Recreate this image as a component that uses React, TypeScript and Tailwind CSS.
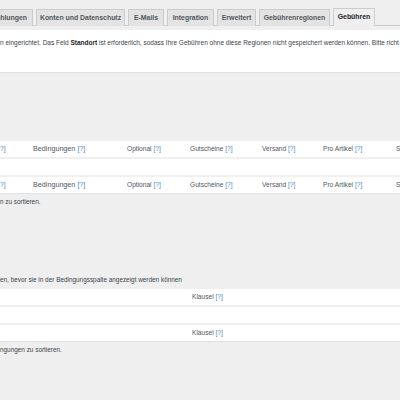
import React from 'react'

const tabs = [
  { label: 'Zahlungen', w: 'w-[33px]', first: true },
  { label: 'Konten und Datenschutz', w: 'w-[89px]' },
  { label: 'E-Mails', w: 'w-[36px]' },
  { label: 'Integration', w: 'w-[47px]' },
  { label: 'Erweitert', w: 'w-[39px]' },
  { label: 'Gebührenregionen', w: 'w-[71px]' },
]

function Help() {
  return <span className="text-[#4a86c5]">[?]</span>
}

function FeeRow({ footer }: { footer?: boolean }) {
  return (
    <div
      className={
        'flex items-center h-[18px] bg-white whitespace-nowrap text-[6.6px] text-[#50575e] ' +
        (footer ? 'border-t-2 border-[#f0f0f1]' : 'border-b-2 border-[#f0f0f1]')
      }
    >
      <div className="w-[33px] shrink-0 text-[#4a86c5]">?]</div>
      <div className="w-[94px] shrink-0 text-[7.2px]">
        Bedingungen <Help />
      </div>
      <div className="w-[63px] shrink-0">
        Optional <Help />
      </div>
      <div className="w-[72px] shrink-0">
        Gutscheine <Help />
      </div>
      <div className="w-[61px] shrink-0">
        Versand <Help />
      </div>
      <div className="w-[73px] shrink-0">
        Pro Artikel <Help />
      </div>
      <div className="shrink-0">S</div>
    </div>
  )
}

function ClauseRow({ footer }: { footer?: boolean }) {
  return (
    <div
      className={
        'flex items-center h-[18px] bg-white pl-[192px] whitespace-nowrap text-[6.6px] text-[#50575e] ' +
        (footer ? 'border-t-2 border-[#f0f0f1]' : 'border-b-2 border-[#f0f0f1]')
      }
    >
      <span>
        Klausel <Help />
      </span>
    </div>
  )
}

export default function App() {
  return (
    <div className="w-[400px] h-[400px] overflow-hidden bg-[#efefef] text-[#3c434a] font-['Liberation_Sans',Arial,sans-serif]">
      {/* tabs */}
      <div className="flex items-end gap-[3px] pt-[8px] border-b border-[#cccccc] h-[26px]">
        {tabs.map((t) => (
          <div
            key={t.label}
            className={
              'h-[17px] shrink-0 flex items-center overflow-hidden whitespace-nowrap bg-[#e3e3e3] border-t border-r border-[#cccccc] text-[6.9px] font-semibold text-[#50575e] mb-[-1px] ' +
              t.w +
              (t.first ? ' justify-end pr-[5px]' : ' justify-center border-l')
            }
          >
            {t.label}
          </div>
        ))}
        <div className="h-[18px] w-[42px] shrink-0 flex items-center justify-center bg-[#efefef] border-t border-l border-r border-[#cccccc] text-[6.9px] font-semibold text-[#1d2327] mb-[-1px]">
          Gebühren
        </div>
      </div>

      {/* notice */}
      <div className="mt-[4px] h-[42px] bg-white shadow-[0_1px_1px_rgba(0,0,0,0.06)] pt-[8px] overflow-hidden whitespace-nowrap text-[6.5px] text-[#3c434a]">
        n eingerichtet. Das Feld <b className="font-bold text-[#1d2327]">Standort</b> ist erforderlich, sodass Ihre Gebühren
        ohne diese Regionen nicht gespeichert werden können. Bitte richt
      </div>

      {/* fees table */}
      <div className="mt-[69px] shadow-[0_1px_1px_rgba(0,0,0,0.05)]">
        <FeeRow />
        <div className="h-[16px] bg-white" />
        <FeeRow footer />
      </div>
      <div className="mt-[4px] text-[6.4px] whitespace-nowrap">n zu sortieren.</div>

      {/* clauses */}
      <div className="mt-[68px] text-[6.4px] whitespace-nowrap">
        en, bevor sie in der Bedingungsspalte angezeigt werden können
      </div>
      <div className="mt-[5px] shadow-[0_1px_1px_rgba(0,0,0,0.05)]">
        <ClauseRow />
        <div className="h-[16px] bg-white" />
        <ClauseRow footer />
      </div>
      <div className="mt-[4px] text-[6.4px] whitespace-nowrap">ngungen zu sortieren.</div>
    </div>
  )
}
